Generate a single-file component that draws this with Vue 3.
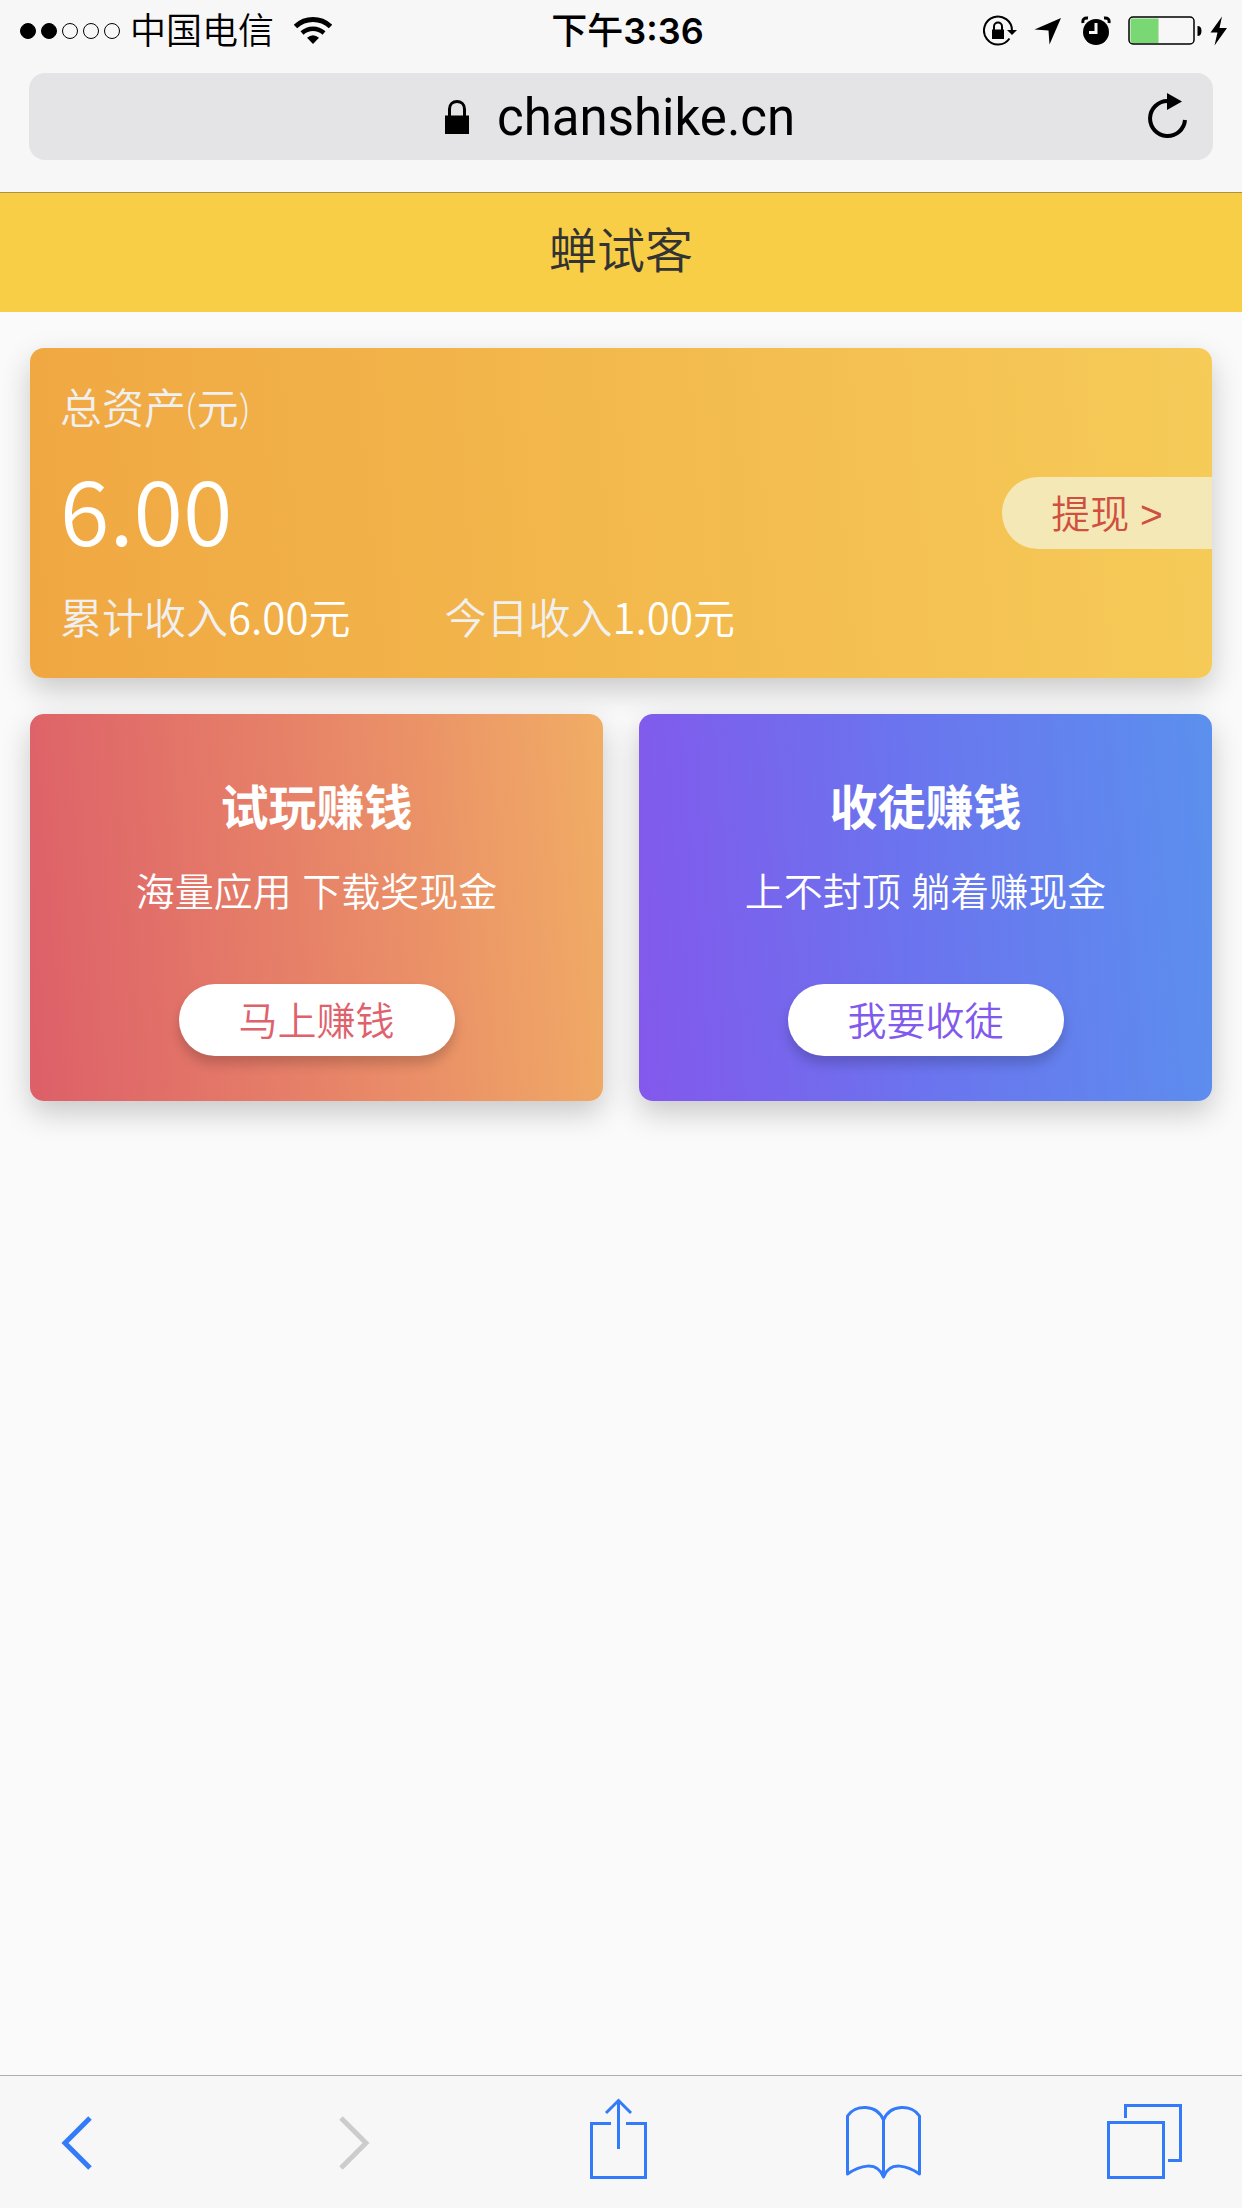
<script setup>
import { ref } from 'vue'

const address = ref('chanshike.cn')
const signal = [true, true, false, false, false]
const assets = {
  total: '6.00',
  stats: [
    { label: '累计收入', value: '6.00元' },
    { label: '今日收入', value: '1.00元' },
  ],
}
const tasks = [
  { id: 'play', title: '试玩赚钱', text: '海量应用 下载奖现金', action: '马上赚钱' },
  { id: 'invite', title: '收徒赚钱', text: '上不封顶 躺着赚现金', action: '我要收徒' },
]
</script>

<template>
  <div class="screen">
    <header class="browser-top">
      <div class="status">
        <div class="status-left">
          <div class="signal">
            <span v-for="(on, i) in signal" :key="i" class="dot" :class="{ on }"></span>
          </div>
          <span class="carrier">中国电信</span>
          <svg class="wifi" width="38" height="28" viewBox="0 0 38 28" fill="none" stroke="#000" aria-hidden="true">
            <path d="M1.5 9.5C11.5 0.2 26.500 0.200 36.500 9.500" stroke-width="5" />
            <path d="M8 16C14.500 10.300 23.500 10.300 30 16" stroke-width="4.500" />
            <path d="M13 20.800Q19 15.500 25 20.800L19 27Z" fill="#000" stroke="none" />
          </svg>
        </div>
        <span class="time"><span class="period">下午</span>3:36</span>
        <div class="status-right">
          <svg width="34" height="32" viewBox="0 0 34 32" aria-hidden="true">
            <path d="M26.500 23.500A14 14 0 1 1 29 15.500" fill="none" stroke="#000" stroke-width="2" />
            <path d="M24 15H34L29 20Z" />
            <path d="M9 14.500H21V24H9Z" />
            <path d="M11 15V11.500A4 4 0 0 1 19 11.500V15" fill="none" stroke="#000" stroke-width="2" />
          </svg>
          <svg class="arrow" width="28" height="28" viewBox="0 0 28 28" aria-hidden="true">
            <path d="M27 1L15.500 27.500L14.500 13.500L0.500 12.500Z" />
          </svg>
          <svg class="alarm" width="30" height="30" viewBox="0 0 30 30" aria-hidden="true">
            <circle cx="15" cy="16" r="13" />
            <path d="M2 7Q1 1.500 7 2M23 2Q29 1.500 28 7" fill="none" stroke="#000" stroke-width="3" />
            <path d="M15 7V16.500H8" fill="none" stroke="#f7f7f7" stroke-width="3" />
          </svg>
          <svg class="battery" width="74" height="30" viewBox="0 0 74 30" aria-hidden="true">
            <rect x="1" y="1" width="65" height="27" rx="4" fill="none" stroke="#000" stroke-width="1.500" />
            <path d="M2.500 4Q2.500 2.500 4 2.500H30.500V27H4Q2.500 27 2.500 25.500Z" fill="#79d874" />
            <path d="M69.500 10Q73.500 10 73.500 15T69.500 20Z" />
          </svg>
          <svg class="bolt" width="17" height="30" viewBox="0 0 17 30" aria-hidden="true">
            <path d="M12 0.500L0.500 16.500H7.500L4.500 29.500L17 12H9.500Z" />
          </svg>
        </div>
      </div>
      <div class="address-bar">
        <svg class="lock" width="24" height="34" viewBox="0 0 24 34" aria-hidden="true">
          <path d="M0 15.500H24V34H0Z" />
          <path d="M4.500 16V9C4.500 -1 19.500 -1 19.500 9V16" fill="none" stroke="#000" stroke-width="3" />
        </svg>
        <input v-model="address" class="address" type="text" aria-label="网址" />
        <button class="reload" type="button" aria-label="刷新">
          <svg width="40" height="46" viewBox="0 0 40 46" aria-hidden="true">
            <path d="M37 27A17.500 17.500 0 1 1 19.500 8" fill="none" stroke="#000" stroke-width="4" />
            <path d="M19 0L34 8.500L19 17Z" />
          </svg>
        </button>
      </div>
    </header>

    <h1 class="page-title">蝉试客</h1>

    <main class="content">
      <section class="assets">
        <div class="assets-info">
          <p class="label">总资产(元)</p>
          <p class="total">{{ assets.total }}</p>
          <div class="stats">
            <p v-for="s in assets.stats" :key="s.label" class="label">
              {{ s.label }}<span class="value">{{ s.value }}</span>
            </p>
          </div>
        </div>
        <button class="withdraw" type="button">提现 <span class="more">&gt;</span></button>
      </section>

      <div class="tasks">
        <section v-for="t in tasks" :key="t.id" class="task" :class="t.id">
          <h2 class="task-title">{{ t.title }}</h2>
          <p class="task-text">{{ t.text }}</p>
          <button class="task-action" type="button">{{ t.action }}</button>
        </section>
      </div>
    </main>

    <nav class="toolbar">
      <button type="button" aria-label="后退">
        <svg width="96" height="84" viewBox="0 0 96 84">
          <path d="M61 18L36 43L61 68" />
        </svg>
      </button>
      <button type="button" aria-label="前进" disabled>
        <svg width="96" height="84" viewBox="0 0 96 84">
          <path d="M45 18L70 43L45 68" />
        </svg>
      </button>
      <button type="button" aria-label="分享">
        <svg width="96" height="84" viewBox="0 0 96 84" class="thin">
          <path d="M48 23.500H28.500V77.500H82.500V23.500H63M55.500 49V1M43 13L55.500 0.500L68 13" />
        </svg>
      </button>
      <button type="button" aria-label="书签">
        <svg width="96" height="84" viewBox="0 0 96 84" class="thin">
          <path d="M53.500 77V20C47 4 25 4 17.500 16V74C29 66 47 60 53.500 77C60 60 78 66 89.500 74V16C82 4 60 4 53.500 20" stroke-linejoin="round" />
        </svg>
      </button>
      <button type="button" aria-label="标签页">
        <svg width="96" height="84" viewBox="0 0 96 84" class="thin">
          <path d="M11.500 22.500H66.500V77.500H11.500ZM28.500 18V5.500H83.500V60.500H71" />
        </svg>
      </button>
    </nav>
  </div>
</template>

<style>
body {
  margin: 0;
  background: #fafafa;
}
</style>

<style scoped>
.screen {
  display: flex;
  flex-direction: column;
  min-height: 100vh;
  font-family: Lato, "Noto Sans CJK SC", sans-serif;
  font-weight: 350;
}

h1,
h2,
p {
  margin: 0;
}

button,
input {
  margin: 0;
  padding: 0;
  border: 0;
  background: none;
  font: inherit;
  color: inherit;
}

svg {
  display: block;
  flex: none;
}

.browser-top {
  padding-bottom: 32px;
  border-bottom: 1px solid #ab923e;
  background: #f7f7f7;
  color: #000;
}

.status {
  display: grid;
  grid-template-columns: 1fr auto 1fr;
  align-items: center;
  height: 60px;
  padding: 0 15px 0 20px;
  font-family: Inter, "Noto Sans CJK SC", sans-serif;
  font-size: 36px;
  line-height: 62px;
}

.status-left,
.status-right,
.signal {
  display: flex;
  align-items: center;
}

.status-right {
  justify-content: flex-end;
}

.signal {
  gap: 5px;
}

.dot {
  box-sizing: border-box;
  width: 16px;
  height: 16px;
  border: 1px solid #000;
  border-radius: 50%;
}

.dot.on {
  background: #000;
}

.carrier {
  margin-left: 10px;
}

.wifi {
  margin-left: 20px;
}

.time {
  padding-left: 8px;
  font-weight: 600;
}

.period {
  font-weight: 500;
}

.arrow {
  margin-left: 17px;
}

.alarm {
  margin-left: 19px;
}

.battery {
  margin-left: 17px;
}

.bolt {
  margin-left: 8px;
}

.address-bar {
  display: flex;
  align-items: center;
  justify-content: center;
  position: relative;
  height: 87px;
  margin: 13px 29px 0;
  border-radius: 16px;
  background: #e4e4e6;
}

.lock {
  margin-right: 28px;
}

.address {
  width: 300px;
  height: 80px;
  padding-top: 2px;
  font-family: Roboto, sans-serif;
  font-size: 51px;
  font-weight: 400;
}

.reload {
  position: absolute;
  top: 20px;
  right: 25px;
}

.page-title {
  height: 119px;
  background: #f7ce46;
  color: #333;
  font-size: 48px;
  font-weight: 350;
  line-height: 114px;
  text-align: center;
}

.content {
  flex: 1;
  padding: 36px 30px;
}

.assets {
  display: flex;
  align-items: center;
  justify-content: space-between;
  border-radius: 14px;
  background: linear-gradient(85deg, #f0a742, #f6cb58);
  box-shadow: 0 12px 30px rgba(0, 0, 0, 0.2);
}

.assets-info {
  padding: 30px;
}

.label {
  color: #f0f0f0;
  font-size: 42px;
  line-height: 60px;
}

.total {
  padding-bottom: 12px;
  color: #fff;
  font-family: "Noto Sans CJK SC", sans-serif;
  font-size: 90px;
  line-height: 138px;
}

.stats {
  display: flex;
  gap: 94px;
}

.value {
  color: #fff;
  font-family: "Noto Sans CJK SC", sans-serif;
  line-height: 1;
}

.withdraw {
  width: 210px;
  height: 72px;
  border-radius: 36px 0 0 36px;
  background: #f5e8b7;
  color: #cf4f40;
  font-size: 39px;
  line-height: 72px;
}

.more {
  font-family: "Liberation Sans", sans-serif;
}

.tasks {
  display: grid;
  grid-template-columns: 1fr 1fr;
  gap: 36px;
  margin-top: 36px;
}

.task {
  display: flex;
  flex-direction: column;
  align-items: center;
  padding: 60px 0 45px;
  border-radius: 14px;
  box-shadow: 0 12px 30px rgba(0, 0, 0, 0.2);
  color: #fff;
}

.play {
  background: linear-gradient(85deg, #dd5f69, #e98b68 60%, #f1ad65);
}

.invite {
  background: linear-gradient(85deg, #8358ec, #6a75ee 50%, #5b90ee);
}

.task-title {
  font-size: 48px;
  font-weight: 700;
  line-height: 66px;
}

.task-text {
  margin-top: 18px;
  font-size: 39px;
  line-height: 66px;
}

.task-action {
  width: 276px;
  height: 72px;
  margin-top: 60px;
  border-radius: 36px;
  background: #fff;
  box-shadow: 0 8px 12px rgba(0, 0, 0, 0.18);
  font-size: 39px;
  line-height: 72px;
}

.play .task-action {
  color: #de616b;
}

.invite .task-action {
  color: #8159ed;
}

.toolbar {
  display: flex;
  align-items: flex-start;
  justify-content: space-between;
  height: 108px;
  padding: 24px 49px 0 29px;
  border-top: 1px solid #adb0af;
  background: #f7f7f7;
  color: #347bfa;
}

.toolbar svg {
  overflow: visible;
  fill: none;
  stroke: currentColor;
  stroke-width: 5;
}

.toolbar .thin {
  stroke-width: 3;
}

.toolbar button:disabled {
  color: #ccc;
}
</style>
